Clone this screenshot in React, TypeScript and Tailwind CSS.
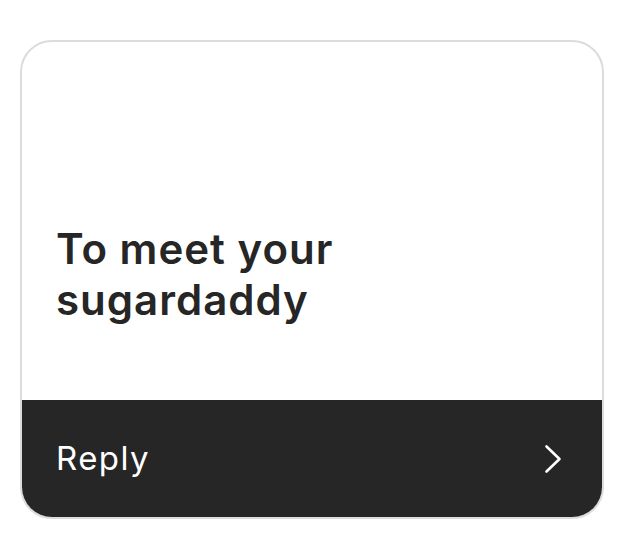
import React from 'react';

const Chevron: React.FC = () => (
  <svg width="18" height="30" viewBox="0 0 18 30" fill="none" className="shrink-0">
    <path d="M2.5 2.5 L15.5 15 L2.5 27.5" stroke="white" strokeWidth="2.6" strokeLinecap="round" strokeLinejoin="round" />
  </svg>
);

const App: React.FC = () => {
  return (
    <div className="w-[635px] h-[550px] bg-white pt-10 pl-5" style={{ fontFamily: 'Inter, "Noto Sans", sans-serif' }}>
      <div className="w-[584px] h-[479px] border-2 border-[#dcdcdc] rounded-[32px] overflow-hidden flex flex-col bg-white">
        <div className="flex-1 flex flex-col justify-end pl-[34px] pb-[75px]">
          <h1 className="text-[42px] leading-[51px] font-semibold text-[#262626] tracking-[1px]">
            To meet your
            <br />
            sugardaddy
          </h1>
        </div>
        <button className="h-[117px] bg-[#262626] flex items-center justify-between pl-[34px] pr-[40px] text-left">
          <span className="text-[33px] leading-none text-white font-normal tracking-[1.4px]">Reply</span>
          <Chevron />
        </button>
      </div>
    </div>
  );
};

export default App;
